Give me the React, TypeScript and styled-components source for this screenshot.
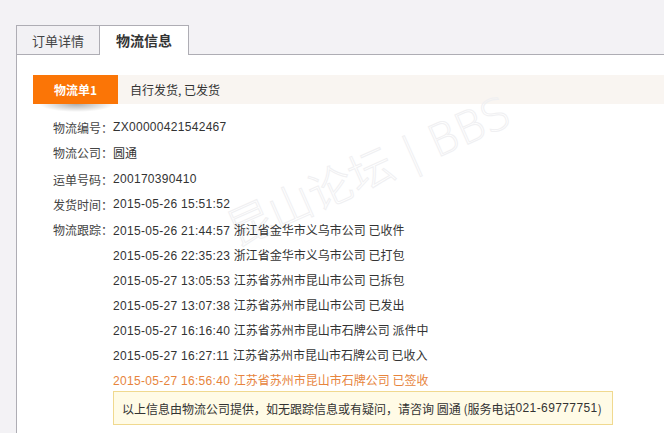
import React from 'react';
import styled, { createGlobalStyle } from 'styled-components';

const GlobalStyle = createGlobalStyle`
  html, body {
    margin: 0;
    padding: 0;
    background: #f3f2f5;
  }
  body {
    font-family: "Liberation Sans", "Noto Sans CJK SC", sans-serif;
    font-size: 12px;
    color: #333;
  }
`;

const Page = styled.div`
  width: 664px;
  height: 433px;
  overflow: hidden;
  padding: 25px 0 0 16px;
  box-sizing: border-box;
  display: flex;
  flex-direction: column;
`;

const TabBar = styled.div`
  display: flex;
  border-bottom: 1px solid #aeadb4;
`;

const Tab = styled.div<{ $active?: boolean }>`
  height: 28px;
  padding: 0 ${({ $active }) => ($active ? '16px' : '15px')};
  display: flex;
  align-items: center;
  border-top: 1px solid #aeadb4;
  border-left: 1px solid #aeadb4;
  border-right: ${({ $active }) => ($active ? '1px solid #aeadb4' : 'none')};
  background: ${({ $active }) => ($active ? '#fff' : '#f2f1f4')};
  margin-bottom: ${({ $active }) => ($active ? '-1px' : '0')};
  padding-bottom: ${({ $active }) => ($active ? '1px' : '0')};
  font-size: ${({ $active }) => ($active ? '14px' : '13px')};
  font-weight: ${({ $active }) => ($active ? 'bold' : 'normal')};
  color: ${({ $active }) => ($active ? '#333' : '#444')};
  font-family: "Noto Sans CJK SC", sans-serif;
`;

const Panel = styled.div`
  position: relative;
  flex: 1;
  background: #fff;
  border-left: 1px solid #aeadb4;
  padding: 20px 0 0 16px;
`;

const Header = styled.div`
  display: flex;
  height: 29px;
`;

const Badge = styled.div`
  position: relative;
  width: 85px;
  display: flex;
  align-items: center;
  justify-content: center;
  background: #fb7506;
  color: #fff;
  font-weight: bold;
  font-family: "Noto Sans CJK SC", sans-serif;
  font-size: 12px;

  &::after {
    content: '';
    position: absolute;
    left: 6px;
    right: 4px;
    top: 100%;
    height: 8px;
    background: radial-gradient(ellipse 50% 100% at 50% 0, rgba(0, 0, 0, 0.32), rgba(0, 0, 0, 0) 100%);
  }
`;

const HeaderInfo = styled.div`
  flex: 1;
  display: flex;
  align-items: center;
  padding-left: 12px;
  background: #f9f5f1;
  font-family: "Noto Sans CJK SC", sans-serif;
  color: #333;
`;

const Details = styled.div`
  position: relative;
  margin-top: 11px;
  padding-left: 20px;
`;

const Row = styled.div`
  display: flex;
  line-height: 25px;
  min-height: 25px;
`;

const Label = styled.span`
  width: 60px;
  flex: none;
  font-family: "Noto Sans CJK SC", sans-serif;
  color: #444;
`;

const Value = styled.span`
  color: #333;
  letter-spacing: 0.3px;
`;

const Cn = styled.span`
  font-family: "Noto Sans CJK SC", sans-serif;
  letter-spacing: 0;
`;

const Track = styled.div`
  display: flex;
  flex-direction: column;
`;

const TrackLine = styled.div<{ $last?: boolean }>`
  line-height: 25px;
  height: 25px;
  white-space: nowrap;
  letter-spacing: 0.3px;
  color: ${({ $last }) => ($last ? '#e7843c' : '#333')};
`;

const Notice = styled.div`
  margin: -1px 0 0 60px;
  width: 500px;
  height: 34px;
  box-sizing: border-box;
  display: flex;
  align-items: center;
  padding-left: 8px;
  background: #fffbe6;
  border: 1px solid #f0d98f;
  font-family: "Noto Sans CJK SC", sans-serif;
  color: #333;
  white-space: nowrap;
`;

const Num = styled.span`
  font-family: "Liberation Sans", sans-serif;
  letter-spacing: 0.4px;
`;

const Watermark = styled.div`
  position: absolute;
  left: 225px;
  top: 140px;
  transform: rotate(-24deg);
  transform-origin: left bottom;
  font-family: "DejaVu Sans", "Noto Sans CJK SC", sans-serif;
  font-weight: 200;
  font-size: 44px;
  color: transparent;
  -webkit-text-stroke: 1px #f0f0f2;
  white-space: nowrap;
  pointer-events: none;
`;

const tracking = [
  ['2015-05-26 21:44:57', '浙江省金华市义乌市公司 已收件'],
  ['2015-05-26 22:35:23', '浙江省金华市义乌市公司 已打包'],
  ['2015-05-27 13:05:53', '江苏省苏州市昆山市公司 已拆包'],
  ['2015-05-27 13:07:38', '江苏省苏州市昆山市公司 已发出'],
  ['2015-05-27 16:16:40', '江苏省苏州市昆山市石牌公司 派件中'],
  ['2015-05-27 16:27:11', '江苏省苏州市昆山市石牌公司 已收入'],
  ['2015-05-27 16:56:40', '江苏省苏州市昆山市石牌公司 已签收'],
];

export default function App() {
  return (
    <Page>
      <GlobalStyle />
      <TabBar>
        <Tab>订单详情</Tab>
        <Tab $active>物流信息</Tab>
      </TabBar>
      <Panel>
        <Watermark>昆山论坛 | BBS</Watermark>
        <Header>
          <Badge>物流单1</Badge>
          <HeaderInfo>自行发货, 已发货</HeaderInfo>
        </Header>
        <Details>
          <Row>
            <Label>物流编号：</Label>
            <Value>ZX00000421542467</Value>
          </Row>
          <Row>
            <Label>物流公司：</Label>
            <Value>
              <Cn>圆通</Cn>
            </Value>
          </Row>
          <Row>
            <Label>运单号码：</Label>
            <Value>200170390410</Value>
          </Row>
          <Row>
            <Label>发货时间：</Label>
            <Value>2015-05-26 15:51:52</Value>
          </Row>
          <Row>
            <Label>物流跟踪：</Label>
            <Track>
              {tracking.map(([time, text], i) => (
                <TrackLine key={time} $last={i === tracking.length - 1}>
                  {time} <Cn>{text}</Cn>
                </TrackLine>
              ))}
            </Track>
          </Row>
          <Notice>
            以上信息由物流公司提供，如无跟踪信息或有疑问，请咨询 圆通 (服务电话<Num>021-69777751</Num>)
          </Notice>
        </Details>
      </Panel>
    </Page>
  );
}
